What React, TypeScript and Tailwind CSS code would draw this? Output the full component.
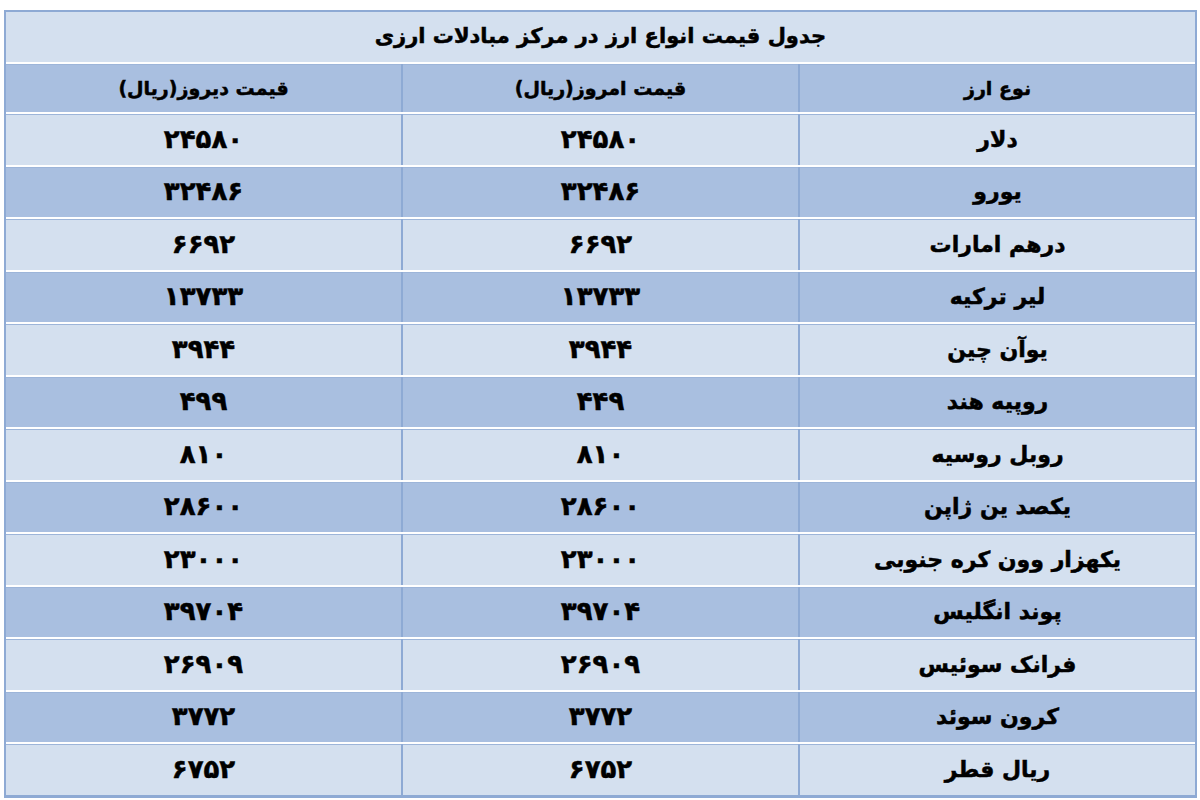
const fa = (s: string) => s.replace(/\d/g, (d) => '۰۱۲۳۴۵۶۷۸۹'[Number(d)]);

const rows: [string, string, string][] = [
    ['دلار', '24580', '24580'],
    ['یورو', '32486', '32486'],
    ['درهم امارات', '6692', '6692'],
    ['لیر ترکیه', '13733', '13733'],
    ['یوآن چین', '3944', '3944'],
    ['روپیه هند', '449', '499'],
    ['روبل روسیه', '810', '810'],
    ['یکصد ین ژاپن', '28600', '28600'],
    ['یکهزار وون کره جنوبی', '23000', '23000'],
    ['پوند انگلیس', '39704', '39704'],
    ['فرانک سوئیس', '26909', '26909'],
    ['کرون سوئد', '3772', '3772'],
    ['ریال قطر', '6752', '6752'],
];

function Row({ cells, dark, header }: { cells: string[]; dark: boolean; header?: boolean }) {
    return (
        <div
            className={`flex border-t-2 border-white shadow-[inset_0_1px_0_#9db5d9] ${header ? 'h-[50px]' : 'h-[52.5px]'} ${dark ? 'bg-[#a9bfe0]' : 'bg-[#d4e0ef]'}`}
        >
            {cells.map((c, i) => (
                <div
                    key={i}
                    className={`flex-1 flex items-center justify-center font-bold text-black [-webkit-text-stroke:0.5px_black] ${header ? 'text-[19px]' : i === 0 ? 'text-[22px]' : 'text-[26px]'} ${i < 2 ? 'border-l-2 border-[#8eaad4]' : ''}`}
                >
                    {c}
                </div>
            ))}
        </div>
    );
}

export default function App() {
    return (
        <div className="w-[1200px] h-[800px] bg-white pt-[10px] pl-[4px] pr-[3px]" style={{ fontFamily: '"DejaVu Sans", sans-serif' }}>
            <div dir="rtl" className="border-2 border-[#8eaad4] border-b-[3px]">
                <div className="h-[50px] bg-[#d4e0ef] flex items-center justify-center font-bold text-[21px] text-black [-webkit-text-stroke:0.5px_black]">
                    جدول قیمت انواع ارز در مرکز مبادلات ارزی
                </div>
                <Row header dark cells={['نوع ارز', 'قیمت امروز(ریال)', 'قیمت دیروز(ریال)']} />
                {rows.map((r, i) => (
                    <Row key={i} dark={i % 2 === 1} cells={[r[0], fa(r[1]), fa(r[2])]} />
                ))}
            </div>
        </div>
    );
}
